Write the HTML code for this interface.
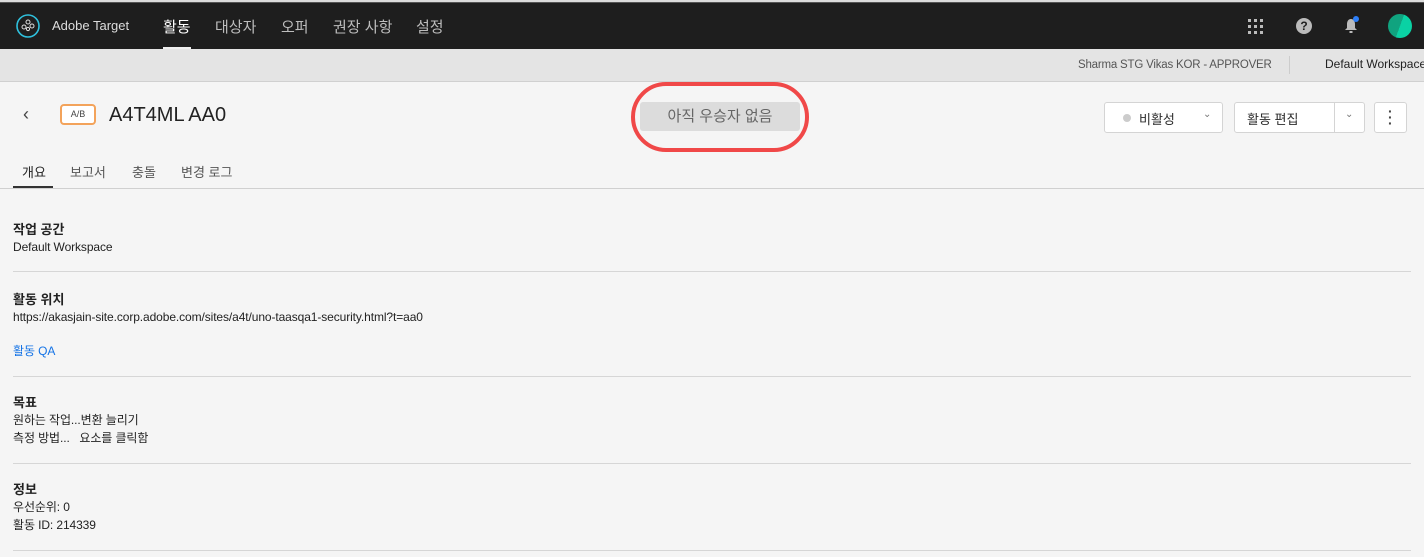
<!DOCTYPE html>
<html><head><meta charset="utf-8"><style>
*{margin:0;padding:0;box-sizing:border-box}
body{width:1424px;height:557px;overflow:hidden;background:#f5f5f5;font-family:"Liberation Sans","Noto Sans CJK KR",sans-serif;color:#2c2c2c;position:relative}
.nav{position:absolute;top:2px;left:0;width:1424px;height:47px;background:#1e1e1e;border-top:1px solid #555}
.top0{position:absolute;top:0;left:0;width:1424px;height:2px;background:#dcdcdc}
.nav span{position:absolute;color:#bdbdbd;font-size:15px;top:13px}
.sub{position:absolute;top:49px;left:0;width:1424px;height:33px;background:#e4e4e4;border-bottom:1px solid #d0d0d0}
.abs{position:absolute}
.hr{position:absolute;left:13px;width:1398px;height:1px;background:#d6d6d6}
.lbl{position:absolute;left:13px;font-size:13px;font-weight:bold;color:#222}
.txt{position:absolute;left:13px;font-size:12px;color:#222;line-height:18px;letter-spacing:-0.1px}
.btn{position:absolute;border:1px solid #d4d4d4;background:#fff;border-radius:3px;height:31px}
</style></head><body>
<div class="top0"></div>
<div class="nav">
<svg class="abs" style="left:16px;top:11px" width="24" height="24" viewBox="0 0 24 24"><circle cx="12" cy="12" r="11" fill="none" stroke="#2fc1dd" stroke-width="1.6"/><g fill="none" stroke="#ddd" stroke-width="1"><circle cx="8" cy="13" r="2"/><circle cx="12" cy="8" r="2"/><circle cx="12" cy="15" r="1.6"/><circle cx="16" cy="12" r="2"/></g></svg>
<span style="left:52px;top:15px;font-size:13px;color:#ddd">Adobe Target</span>
<span style="left:163px;color:#fff">활동</span>
<div class="abs" style="left:163px;top:44px;width:28px;height:3px;background:#eee"></div>
<span style="left:215px">대상자</span>
<span style="left:281px">오퍼</span>
<span style="left:333px">권장 사항</span>
<span style="left:416px">설정</span>
<svg class="abs" style="left:1248px;top:16px" width="15" height="15"><g fill="#bbb"><rect x="0" y="0" width="3" height="3"/><rect x="6" y="0" width="3" height="3"/><rect x="12" y="0" width="3" height="3"/><rect x="0" y="6" width="3" height="3"/><rect x="6" y="6" width="3" height="3"/><rect x="12" y="6" width="3" height="3"/><rect x="0" y="12" width="3" height="3"/><rect x="6" y="12" width="3" height="3"/><rect x="12" y="12" width="3" height="3"/></g></svg>
<div class="abs" style="left:1296px;top:15px;width:16px;height:16px;border-radius:50%;background:#bbb;color:#1e1e1e;font-size:12px;font-weight:bold;text-align:center;line-height:16px">?</div>
<svg class="abs" style="left:1342px;top:12px" width="20" height="20" viewBox="0 0 20 20"><path d="M9 4c-3 0-4 3-4 5v4l-2 2h12l-2-2V9c0-2-1-5-4-5z" fill="#bbb"/><rect x="7.5" y="16" width="3" height="2" fill="#bbb"/><circle cx="14" cy="4" r="3" fill="#2d7ff9"/></svg>
<div class="abs" style="left:1388px;top:11px;width:24px;height:24px;border-radius:50%;background:linear-gradient(110deg,#10a37f 50%,#0ad2a4 50%)"></div>
</div>
<div class="sub">
<div class="abs" style="left:1078px;top:10px;font-size:11.5px;color:#555;letter-spacing:-0.2px">Sharma STG Vikas KOR - APPROVER</div>
<div class="abs" style="left:1289px;top:7px;width:1px;height:18px;background:#ccc"></div>
<div class="abs" style="left:1325px;top:8px;font-size:12px;color:#222;white-space:nowrap">Default Workspace</div>
</div>
<div class="abs" style="left:23px;top:104px;font-size:18px;color:#444">‹</div>
<div class="abs" style="left:60px;top:104px;width:36px;height:21px;border:2px solid #f3a35b;border-radius:4px;font-size:9px;text-align:center;line-height:17px;color:#444;background:#fff">A/B</div>
<div class="abs" style="left:109px;top:104px;font-size:20px;color:#222">A4T4ML AA0</div>
<div class="abs" style="left:640px;top:102px;width:160px;height:29px;background:#dcdcdc;border-radius:3px;font-size:15px;color:#666;text-align:center;line-height:29px">아직 우승자 없음</div>
<div class="abs" style="left:631px;top:82px;width:178px;height:70px;border:4px solid #f04848;border-radius:40px"></div>
<div class="btn" style="left:1104px;top:102px;width:119px"><span class="abs" style="left:18px;top:11px;width:8px;height:8px;border-radius:50%;background:#ccc"></span><span class="abs" style="left:34px;top:6px;font-size:13px">비활성</span><span class="abs" style="left:98px;top:6px;font-size:10px;color:#777">⌄</span></div>
<div class="btn" style="left:1234px;top:102px;width:131px"><span class="abs" style="left:12px;top:6px;font-size:13px">활동 편집</span><span class="abs" style="left:99px;top:0;width:1px;height:29px;background:#d4d4d4"></span><span class="abs" style="left:110px;top:6px;font-size:10px;color:#777">⌄</span></div>
<div class="btn" style="left:1374px;top:102px;width:33px"><span class="abs" style="left:13px;top:5px;font-size:14px;font-weight:bold;line-height:6px;color:#444">·<br>·<br>·</span></div>
<div class="abs" style="left:22px;top:162px;font-size:13px;color:#222">개요</div>
<div class="abs" style="left:13px;top:186px;width:40px;height:2px;background:#333"></div>
<div class="abs" style="left:70px;top:162px;font-size:13px;color:#555">보고서</div>
<div class="abs" style="left:132px;top:162px;font-size:13px;color:#555">충돌</div>
<div class="abs" style="left:181px;top:162px;font-size:13px;color:#555">변경 로그</div>
<div class="abs" style="left:0;top:188px;width:1424px;height:1px;background:#d0d0d0"></div>
<div class="lbl" style="top:219px">작업 공간</div>
<div class="txt" style="top:238px">Default Workspace</div>
<div class="hr" style="top:271px"></div>
<div class="lbl" style="top:289px">활동 위치</div>
<div class="txt" style="top:308px">https://akasjain-site.corp.adobe.com/sites/a4t/uno-taasqa1-security.html?t=aa0</div>
<div class="txt" style="top:342px;color:#1473e6">활동 QA</div>
<div class="hr" style="top:376px"></div>
<div class="lbl" style="top:392px">목표</div>
<div class="txt" style="top:411px">원하는 작업...변환 늘리기<br>측정 방법...&nbsp;&nbsp;&nbsp;요소를 클릭함</div>
<div class="hr" style="top:463px"></div>
<div class="lbl" style="top:479px">정보</div>
<div class="txt" style="top:498px">우선순위: 0<br>활동 ID: 214339</div>
<div class="hr" style="top:550px"></div>
</body></html>
